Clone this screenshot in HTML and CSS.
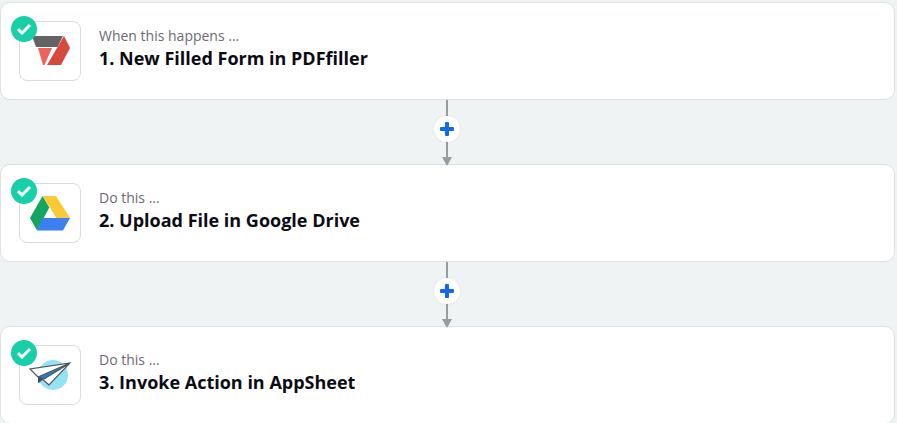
FILE: index.html
```html
<!DOCTYPE html>
<html lang="en">
<head>
    <meta charset="UTF-8">
    <meta name="viewport" content="width=device-width, initial-scale=1.0">
    <title>Zap steps</title>
    <link rel="stylesheet" href="styles.css">
</head>
<body>

    <div class="flow">
        <div class="step">
            <div class="icon-box">
                <span class="check"><svg width="16" height="12" viewBox="0 0 16 12"><path d="M2 6.200l4 3.800 8-8" fill="none" stroke="#fff" stroke-width="3"/></svg></span>
                <svg class="logo" width="42" height="32" viewBox="0 0 42 32">
                    <path d="M3 1h31l-5.500 11H7z" fill="#636363"/>
                    <path d="M9 13h14l-7.500 17H14z" fill="#f0635a"/>
                    <path d="M35 1l6 12-9 17H18z" fill="#d64a3d"/>
                </svg>
            </div>
            <div class="step-text">
                <p class="step-label">When this happens ...</p>
                <h3 class="step-title">1. New Filled Form in PDFfiller</h3>
            </div>
        </div>

        <div class="connector">
            <span class="plus"></span>
            <span class="arrow"></span>
        </div>

        <div class="step">
            <div class="icon-box">
                <span class="check"><svg width="16" height="12" viewBox="0 0 16 12"><path d="M2 6.200l4 3.800 8-8" fill="none" stroke="#fff" stroke-width="3"/></svg></span>
                <svg class="logo" width="40" height="36" viewBox="0 0 40 36">
                    <path d="M12.500 1h13.500l14 22H26.500z" fill="#fbc934"/>
                    <path d="M12.500 1l6.800 11.500L7 35.500 0 23z" fill="#12a661"/>
                    <path d="M12.500 23H40l-7 12.500H7z" fill="#3d7ff0"/>
                </svg>
            </div>
            <div class="step-text">
                <p class="step-label">Do this ...</p>
                <h3 class="step-title">2. Upload File in Google Drive</h3>
            </div>
        </div>

        <div class="connector">
            <span class="plus"></span>
            <span class="arrow"></span>
        </div>

        <div class="step">
            <div class="icon-box">
                <span class="check"><svg width="16" height="12" viewBox="0 0 16 12"><path d="M2 6.200l4 3.800 8-8" fill="none" stroke="#fff" stroke-width="3"/></svg></span>
                <svg class="logo" width="42" height="32" viewBox="0 0 42 32">
                    <circle cx="24" cy="16" r="15" fill="#95e2f4"/>
                    <path d="M1 10l40-6-21 22-8-7z" fill="#fff"/>
                    <path d="M9 18l32-14-26 16-5 4z" fill="#2f7cc4"/>
                    <path d="M9 18v6l6-5z" fill="#3f4a55"/>
                    <path d="M9 18L1 10l40-6-21 22-8-7M15 20L41 4 9 18" fill="none" stroke="#4a5560" stroke-width="1.200"/>
                </svg>
            </div>
            <div class="step-text">
                <p class="step-label">Do this ...</p>
                <h3 class="step-title">3. Invoke Action in AppSheet</h3>
            </div>
        </div>
    </div>

</body>
</html>
```

FILE: styles.css
```css
html, body { height: 100%; overflow: hidden; }
body { margin: 0; background-color: #f0f3f4; font-family: "Open Sans", sans-serif; }
.flow { width: 895px; padding-top: 2px; }
.step { display: flex; align-items: center; height: 98px; box-sizing: border-box; padding-left: 19px; background: #fff; border: 1px solid #dde1e3; border-radius: 10px; }
.icon-box { position: relative; display: flex; align-items: center; justify-content: center; flex: none; width: 62px; height: 60px; margin-left: -1px; box-sizing: border-box; background: #fff; border: 1px solid #d9dcdd; border-radius: 8px; }
.check { position: absolute; left: -9px; top: -6px; display: flex; align-items: center; justify-content: center; width: 26px; height: 26px; border-radius: 50%; background: #17cfa8; }
.step-text { margin-left: 18px; margin-bottom: 5px; }
.step-label { margin: 0; font-size: 14px; line-height: 20px; color: #6b6874; }
.step-title { margin: 0; font-size: 18px; line-height: 25px; font-weight: 700; color: #0b0b14; }
.connector { position: relative; display: flex; flex-direction: column; align-items: center; justify-content: center; height: 64px; width: 30px; margin-left: 432px; }
.connector::before { content: ""; position: absolute; left: 14px; top: 0; bottom: 3px; width: 2px; background: #979c9f; }
.plus { position: relative; width: 26px; height: 26px; margin-top: -6px; border-radius: 50%; background: #fff; box-shadow: 0 0 3px rgba(0, 0, 0, 0.08); }
.plus::before, .plus::after { content: ""; position: absolute; background: #1366f0; border-radius: 1px; }
.plus::before { left: 6px; top: 11px; width: 14px; height: 4px; }
.plus::after { left: 11px; top: 6px; width: 4px; height: 14px; }
.arrow { position: absolute; left: 10px; bottom: -2px; width: 0; height: 0; border-left: 5px solid transparent; border-right: 5px solid transparent; border-top: 9px solid #979c9f; }
```
